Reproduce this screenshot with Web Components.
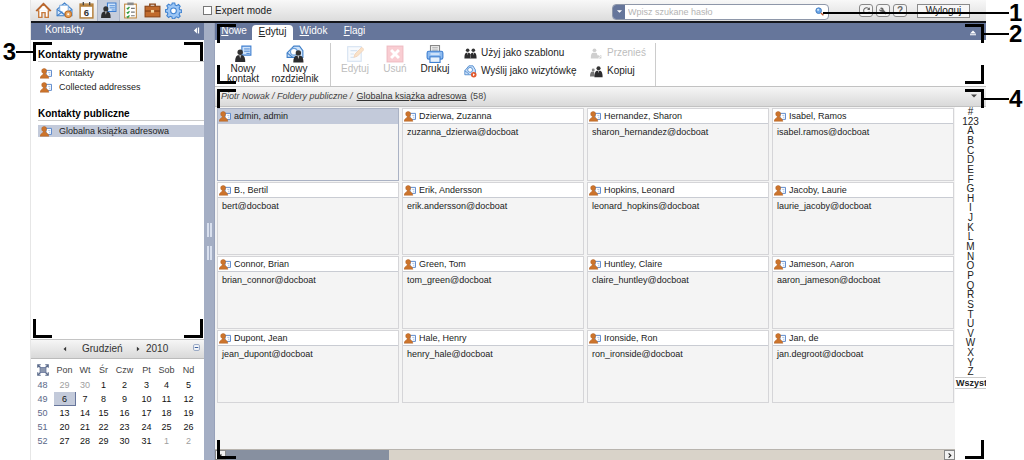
<!DOCTYPE html>
<html lang="pl">
<head>
<meta charset="utf-8">
<title>Kontakty</title>
<style>
html,body{margin:0;background:#fff}
body{font-family:"Liberation Sans",Arial,sans-serif;font-size:10px;line-height:12px;color:#222;
--blue:#66769b;--sel:#c3cada;--bar:linear-gradient(#f6f6f6,#d9d9d9)}
</style>
</head>
<body>
<mail-app></mail-app>
<script>
const ICONS = {
home:'<path d="M2 8.500 8 2l6 6.500M3.500 8v6.500h3V10h3v4.500h3V8" fill="#fff" stroke="#c77a3c" stroke-width="1.300"/><path d="M1 8.500 8 1.300 15 8.500" fill="none" stroke="#b5622c" stroke-width="1.300"/>',
mail:'<path d="M1 7 8 1l7 6v6H1z" fill="#d9e9fa" stroke="#3f7fc8"/><path d="M3.500 3h8v5l-4 3-4-3z" fill="#fff" stroke="#6aa0dc" stroke-width=".8"/><path d="m1 7 7 5 7-5M1 13l5-4" fill="none" stroke="#3f7fc8"/><circle cx="11.500" cy="11.500" r="3" fill="#e8a45c" stroke="#c06a1c"/><circle cx="11.500" cy="11.500" r="1" fill="#fff"/>',
cal:'<rect x="2" y="2" width="12" height="13" fill="#fff" stroke="#b5803c" stroke-width="1.400"/><path d="M2 3.500h12" stroke="#b5803c" stroke-width="2"/><path d="M5 0v3M11 0v3" stroke="#444" stroke-width="1.200"/><text x="8" y="13" font-size="9" font-weight="bold" text-anchor="middle" fill="#333">6</text>',
person:'<path d="M7 1h8v8H7z" fill="#cfe3fa" stroke="#3f7fd0"/><path d="M9 3.500h5M9 5.500h5M11 7.500h3" stroke="#3f7fd0" stroke-width=".8"/><circle cx="5.500" cy="6.500" r="2.400" fill="#333"/><path d="M1 15c0-4 1-6 3-6h3c2 0 3 2 3 6z" fill="#2c2c2e"/><path d="m4.700 9 .8 3 .8-3z" fill="#ccc"/>',
tasks:'<rect x="2.500" y="2" width="11" height="13" fill="#fff" stroke="#c0863c"/><rect x="5" y="0.500" width="6" height="2.500" fill="#8a8a8a"/><path d="m4.500 5.500 1 1 1.500-2m-2.500 5 1 1 1.500-2m-2.500 5 1 1 1.500-2" fill="none" stroke="#2f9a3c" stroke-width="1.200"/><path d="M8.500 6H12M8.500 9.500H12M8.500 13H12" stroke="#777"/>',
case:'<path d="M5.500 4V2h5v2" fill="none" stroke="#8a4416" stroke-width="1.400"/><rect x="1" y="4" width="14" height="10" fill="#c06a2c" stroke="#8a4416"/><path d="M1 8.500h14" stroke="#7a3a12"/><rect x="6.500" y="7.500" width="3" height="2.500" fill="#f4d6a0"/>',
gear:'<path d="m6.800 1h2.400l.4 1.900 1.400.6 1.700-1.100 1.600 1.700-1 1.600.5 1.400 1.900.4v2.300l-1.900.4-.6 1.400 1.100 1.700-1.700 1.600-1.600-1-1.400.5-.4 1.400H6.900l-.4-1.700-1.500-.6-1.600 1.100-1.700-1.700 1-1.600-.5-1.400L.5 9.500V7.200l1.700-.4.6-1.500-1.100-1.600L3.400 2l1.600 1 1.400-.5z" fill="#9cc6f5" stroke="#3f82d0"/><circle cx="8" cy="8.300" r="2.700" fill="#fff" stroke="#3f82d0"/>',
list:'<path d="M1 7 7 1h5l3 4v6H1z" fill="#cfe3fa" stroke="#3f7fc8"/><circle cx="7" cy="6" r="3" fill="#fff" stroke="#6aa0dc"/><path d="m1 7 5 4" stroke="#3f7fc8"/><circle cx="11" cy="7" r="2.400" fill="#333"/><path d="M6.500 15.500c0-4 1-6 3-6h3c2 0 3 2 3 6z" fill="#2c2c2e"/><path d="m10.200 9.500.8 3 .8-3z" fill="#ccc"/>',
edit:'<g opacity=".4"><rect x="1.500" y="1.500" width="12" height="13" fill="#eef4fb" stroke="#9bbbe0"/><path d="M4 5h6M4 8h3M4 11h3" stroke="#9bbbe0"/><path d="m7 11 1-3 6-6 2 2-6 6z" fill="#f5b878" stroke="#d88a4c" stroke-width=".7"/></g>',
del:'<rect x="1" y="1" width="14" height="14" fill="#f9cdd2" stroke="#f0bcc2"/><path d="m4.500 4.500 7 7m0-7-7 7" stroke="#fff" stroke-width="2.600"/>',
print:'<rect x="4" y="0.500" width="8" height="6" fill="#f4f4f4" stroke="#888"/><path d="M5.500 2.500h5M5.500 4.500h5" stroke="#999" stroke-width=".8"/><rect x="1" y="5.500" width="14" height="7" rx="1.500" fill="#8fbcf0" stroke="#3f7fd0"/><path d="M4 8h8" stroke="#fff"/><rect x="3.500" y="10.500" width="9" height="5" fill="#e8f2fd" stroke="#3f7fd0"/>',
two:'<circle cx="4.500" cy="4" r="2.200" fill="#333"/><circle cx="11.500" cy="4" r="2.200" fill="#333"/><path d="M.5 14c0-5 1-7 3-7h2c2 0 2.500 2 2.500 3 0-1 .5-3 2.500-3h2c2 0 3 2 3 7z" fill="#2c2c2e"/><path d="m4 7 .6 3 .6-3zM11 7l.6 3 .6-3z" fill="#ddd"/><path d="M8 10v4" stroke="#999" stroke-width=".8"/>',
send:'<path d="M1 7 6 1h5l3 5v6H1z" fill="#cfe3fa" stroke="#3f7fc8"/><circle cx="7.500" cy="6" r="3" fill="#fff" stroke="#3f7fc8"/><path d="m1 7 5 4" stroke="#3f7fc8"/><circle cx="12" cy="12" r="3.400" fill="#e0582c"/><path d="m11 10.300 2.500 1.700-2.500 1.700z" fill="#fff"/>',
move:'<g fill="#cfcfcf"><circle cx="5.500" cy="4" r="2.300"/><path d="M1 14c0-5 1-7 3-7h3c2 0 2 2 2 3h5v4z"/></g><path d="m10 9 3 2.500-3 2.500" stroke="#fff" fill="none"/>',
copy:'<circle cx="4" cy="6" r="1.800" fill="#888"/><path d="M0 14c0-4 1-6 3-6h2l1 6z" fill="#777"/><circle cx="10.500" cy="4" r="2.500" fill="#333"/><path d="M5.500 15c0-5 1-8 3.500-8h3c2.500 0 3.500 3 3.500 8z" fill="#2c2c2e"/><path d="m9.800 7 .7 3 .7-3z" fill="#ccc"/>',
contact:'<path d="M8 4.500h7.300v8H8z" fill="#fff" stroke="#4f80c8" stroke-width="1.200"/><path d="M11 7.200h2.800M12 9.700h1.800" stroke="#8fb0de"/><path d="M2.300 5c0-4 6.500-4 6.500 0 0 2-.8 3-1.500 3.500 0 2.300 4 1.800 4.500 6.500H.2c.3-4.500 4.300-4 4.300-6.500C3 8 2.300 7 2.300 5z" fill="#cc742c" stroke="#a9591c" stroke-width=".6"/>',
glass:'<circle cx="6.500" cy="6.500" r="5" fill="#6ba7ea" stroke="#3d74b8" stroke-width="1.500"/><circle cx="5.500" cy="5" r="2" fill="#cfe5fb"/><path d="m10.500 10.500 4.500 4" stroke="#b5562c" stroke-width="2.500"/>',
refresh:'<path d="M12.500 5.500A5.200 5.200 0 1 0 13 10" fill="none" stroke="#666" stroke-width="1.800"/><path d="M14 2v5H9z" fill="#666"/>',
wrench:'<path d="M3 3.500c2-2 6-1 6 2.500l5 5.500-2 2L6.500 9C3.500 9.500 1.500 7 2 5l3 1.500L6 5z" fill="#666"/>',
down:'<path d="M2 5h12l-6 6z" fill="currentColor"/>',
up:'<path d="M2 9h12L8 3zM2 10.500h12v2H2z" fill="currentColor"/>',
prev:'<path d="M11 2v12L4 8z" fill="currentColor"/>',
next:'<path d="M5 2v12l7-6z" fill="currentColor"/>',
fold:'<path d="M9 1v14L2 8zM11 1h3v14h-3z" fill="currentColor"/>',
chev:'<path d="m6 3 5 5-5 5" fill="none" stroke="#222" stroke-width="2.500"/>',
minus:'<rect x="1.500" y="1.500" width="13" height="13" rx="2" fill="#fff" stroke="#7f93b8" stroke-width="2"/><path d="M4 8h8" stroke="#3c5f9c" stroke-width="2.500"/>',
grid:'<g fill="none" stroke="#5a6a8a" stroke-width="1.500"><path d="M1 5V1h4M11 1h4v4M15 11v4h-4M5 15H1v-4M1 1l4 4M15 1l-4 4M1 15l4-4M15 15l-4-4"/></g><rect x="4" y="4.500" width="8" height="7" fill="#8b97ae" stroke="#66759b"/>'
};
const RESET = '*{box-sizing:border-box}button{font:inherit;color:inherit;background:none;border:0;padding:0;margin:0}a{color:inherit;text-decoration:none}u{text-decoration:underline}';
function define(name, css, html){
  customElements.define(name, class extends HTMLElement{
    constructor(){
      super();
      const t=document.createElement('template');
      t.innerHTML='<style>'+RESET+css+'</style>'+(typeof html==='function'?html(this):html);
      this.attachShadow({mode:'open'}).append(t.content.cloneNode(true));
    }
  });
}
const ic=(n,s=16)=>`<ui-icon name="${n}" style="--s:${s}px"></ui-icon>`;

define('ui-icon',':host{display:inline-flex;flex:none;width:var(--s,16px);height:var(--s,16px)}svg{display:block;width:100%;height:100%}',
  el=>`<svg viewBox="0 0 16 16" aria-hidden="true">${ICONS[el.getAttribute('name')]||''}</svg>`);

/* Numbered bracket frame laid over a region */
define('callout-frame',`:host{position:absolute;inset:var(--inset);pointer-events:none;z-index:5}
i{position:absolute;width:19px;height:19px;border:0 solid #000}
.a{left:0;top:0;border-width:3px 0 0 3px}.b{right:0;top:0;border-width:3px 3px 0 0}
.c{left:0;bottom:0;border-width:0 0 3px 3px}.d{right:0;bottom:0;border-width:0 3px 3px 0}
span{position:absolute;top:10px;display:flex;align-items:center;height:0;font:bold 24px/18px "Liberation Sans",Arial,sans-serif;color:#000}
span::before{content:"";height:2px;width:var(--line,25px);background:#000}
:host([side=right]) span{left:100%}
:host([side=left]) span{right:100%;flex-direction:row-reverse}`,
'<i class="a"></i><i class="b"></i><i class="c"></i><i class="d"></i><span><slot></slot></span>');

define('top-bar',`:host{display:flex;align-items:center;height:23px;box-sizing:border-box;border-bottom:2px solid #15171c;background:linear-gradient(#f8f8f8,#dcdcdc);padding:0 16px 0 2px}
nav{display:flex;width:151px;align-self:stretch}
nav button{flex:1;display:flex;align-items:center;justify-content:center}
nav button.on{background:#c6cddb;border:solid #adb6c8;border-width:0 1px}
label{display:flex;align-items:center;gap:3px;margin-left:19px;white-space:nowrap}
input[type=checkbox]{appearance:none;width:9px;height:9px;margin:0;border:1px solid #777;background:#fff}
form{display:flex;width:217px;height:16px;margin:2px 0 0 auto;border:1px solid #8e97a9;border-radius:4px;background:#fff;align-items:center;padding-right:4px}
form button:first-child{width:12px;align-self:stretch;background:var(--blue);color:#fff;display:flex;align-items:center;justify-content:center;border-radius:3px 0 0 3px}
input[type=search]{flex:1;min-width:0;border:0;outline:0;padding:0 3px;background:none;font:inherit;font-size:9px}
input::placeholder{color:#b4b4b4;opacity:1}
.q{display:flex}
.tools{display:flex;gap:3px;margin-left:30px}
.tools button{width:14px;height:13px;border:1px solid #888;border-radius:3px;display:flex;align-items:center;justify-content:center;font-weight:bold;color:#666;background:#f4f4f4}
.out{width:53px;height:14px;margin-left:10px;border:1px solid #8a8a8a;line-height:10px;background:#f7f7f7}
.hint{position:relative;width:0;height:0}
.hint span{position:absolute;top:1px;left:-1px;z-index:6;display:flex;align-items:center;height:0;font:bold 24px/18px "Liberation Sans",Arial,sans-serif;color:#000}
.hint span::before{content:"";width:186px;height:2px;background:#000}`,
`<nav aria-label="Moduły">${['home','mail','cal','person','tasks','case','gear'].map(n=>`<button type="button" class="${n==='person'?'on':''}">${ic(n,17)}</button>`).join('')}</nav>
<label><input type="checkbox">Expert mode</label>
<form onsubmit="return false"><button type="button">${ic('down',7)}</button><input type="search" placeholder="Wpisz szukane hasło" aria-label="Wpisz szukane hasło"><button class="q">${ic('glass',9)}</button><div class="hint"><span>1</span></div></form>
<div class="tools"><button type="button">${ic('refresh',9)}</button><button type="button">${ic('wrench',10)}</button><button type="button">?</button></div>
<button type="button" class="out">Wyloguj</button>`);

define('folder-item',`:host{display:block}a{display:flex;align-items:center;gap:7px;height:14px;padding-left:2px;white-space:nowrap;font-size:9px}
:host([selected]) a{background:var(--sel);height:12px}`,
`<a href="#">${ic('contact',12)}<span><slot></slot></span></a>`);

define('folder-group',`:host{display:block}h2{margin:0 0 4px;font:bold 10px/13px "Liberation Sans",Arial,sans-serif;color:#000;border-bottom:1px solid #ccc;white-space:nowrap}`,
`<h2><slot name="title"></slot></h2><slot></slot>`);

const weeks=[[48,29,30,1,2,3,4,5],[49,6,7,8,9,10,11,12],[50,13,14,15,16,17,18,19],[51,20,21,22,23,24,25,26],[52,27,28,29,30,31,1,2]];
define('month-calendar',`:host{display:block;height:121px}
header{display:flex;align-items:center;height:20px;background:var(--bar);border-top:1px solid #c4c4c4;border-bottom:1px solid #bbb;padding:0 4px 0 31px;white-space:nowrap;color:#333}
.m{width:44px;margin:0 9px 0 14px}.y{margin-left:5px}.fold{margin-left:auto;align-self:flex-start;padding-top:4px}
button{display:flex}
table{border-collapse:collapse;table-layout:fixed;width:169px;font-size:9px;line-height:12px;margin-top:3px}
td,th{padding:0;height:14px;text-align:center;font-weight:normal;border:1px solid transparent}
thead th{height:15px;color:#444}tbody th{color:#5a6788}td{color:#111}
td.out{color:#a0a0a0}td.today{background:var(--sel);border:1px solid #66759b}
thead ui-icon{vertical-align:top}`,
`<header><button type="button">${ic('prev',6)}</button><span class="m">Grudzień</span><button type="button">${ic('next',6)}</button><span class="y">2010</span><button type="button" class="fold">${ic('minus',7)}</button></header>
<table><colgroup>${[22,22,19,18,24,20,20,24].map(w=>`<col style="width:${w}px">`).join('')}</colgroup>
<thead><tr><th>${ic('grid',12)}</th>${['Pon','Wt','Śr','Czw','Pt','Sob','Nd'].map(d=>`<th>${d}</th>`).join('')}</tr></thead>
<tbody>${weeks.map((w,r)=>'<tr>'+w.map((d,c)=>c===0?`<th>${d}</th>`:`<td class="${(r===0&&d>20)||(r===4&&d<5)?'out':r===1&&c===1?'today':''}">${d}</td>`).join('')+'</tr>').join('')}</tbody></table>`);

define('side-panel',`:host{display:flex;flex-direction:column;width:173px;flex:none}
header{display:flex;align-items:center;justify-content:space-between;height:17px;background:var(--blue);color:#fff;padding:0 4px 3px 14px}
header button{display:flex}
.list{position:relative;flex:1;padding:8px 0 0 7px}
folder-group+folder-group{margin-top:13px}`,
`<header><span>Kontakty</span><button type="button">${ic('fold',7)}</button></header>
<div class="list"><folder-group><span slot="title">Kontakty prywatne</span><folder-item>Kontakty</folder-item><folder-item>Collected addresses</folder-item></folder-group>
<folder-group><span slot="title">Kontakty publiczne</span><folder-item selected>Globalna książka adresowa</folder-item></folder-group>
<callout-frame side="left" style="--inset:2px 1px 1px 2px;--line:17px">3</callout-frame></div>
<month-calendar></month-calendar>`);

define('split-bar',`:host{display:flex;flex-direction:column;align-items:center;justify-content:center;gap:9px;width:11px;box-sizing:border-box;flex:none;background:#a4aec4;border:solid #97a1b9;border-width:0 1px 0 0}
i{width:5px;height:14px;border:solid #d9e0ee;border-width:0 2px}`,'<i></i><i></i>');

define('tool-button',`:host{display:block;width:var(--w,40px)}:host([disabled]){color:#bdbdbd}
button{display:flex;flex-direction:column;align-items:center;width:100%;text-align:center;line-height:10px;gap:1px;padding-top:5px}
:host([row]) button{flex-direction:row;gap:4px;height:18px;padding:0;white-space:nowrap}
:host([row]) ui-icon{--s:13px!important}`,
el=>`<button type="button">${ic(el.getAttribute('icon'),18)}<span><slot></slot></span></button>`);

define('ribbon-bar',`:host{display:block;position:relative}
nav{display:flex;align-items:stretch;height:17px;padding:2px 9px 0 2px;background:var(--blue);color:#fff}
nav a{width:41px;text-align:center;line-height:12px}nav a:first-child{width:34px;margin-right:1px}
nav a.on{background:#fff;color:#222;border-radius:4px 4px 0 0;line-height:14px}
nav button{margin-left:auto;display:flex;align-items:center}
.row{display:flex;height:46px;padding-left:2px;background:#fff}
.s{width:1px;margin:3px 4px 0 9px;background:#ccc}
.col{padding:4px 0 0 9px;width:135px}.col+.col{padding-left:0;width:65px}.e{margin:3px 0 0}`,
`<nav><a href="#"><u>N</u>owe</a><a href="#" class="on"><u>E</u>dytuj</a><a href="#"><u>W</u>idok</a><a href="#"><u>F</u>lagi</a><button type="button">${ic('up',8)}</button></nav>
<div class="row"><tool-button icon="person" style="--w:52px">Nowy kontakt</tool-button><tool-button icon="list" style="--w:52px">Nowy rozdzielnik</tool-button><div class="s"></div>
<tool-button icon="edit" disabled>Edytuj</tool-button><tool-button icon="del" disabled>Usuń</tool-button><tool-button icon="print">Drukuj</tool-button>
<div class="col"><tool-button row icon="two" style="--w:auto">Użyj jako szablonu</tool-button><tool-button row icon="send" style="--w:auto">Wyślij jako wizytówkę</tool-button></div>
<div class="col"><tool-button row disabled icon="move" style="--w:auto">Przenieś</tool-button><tool-button row icon="copy" style="--w:auto">Kopiuj</tool-button></div><div class="s e"></div></div>
<callout-frame side="right" style="--inset:1px 2px 2px 2px">2</callout-frame>`);

define('contact-card',`:host{display:block;box-sizing:border-box;height:73px;border:1px solid #d5d5d8;background:#f4f4f4;min-width:0;font-size:9px}
h3{display:flex;align-items:center;gap:3px;margin:0;height:15px;padding-left:1px;background:#fff;border-bottom:1px solid #c9ccd3;font:9px/14px "Liberation Sans",Arial,sans-serif;white-space:nowrap}
p{margin:2px 0 0 4px;line-height:12px;white-space:nowrap}
:host([selected]){border-color:#aab2c4}:host([selected]) h3{background:var(--sel);border-color:var(--sel)}`,
`<h3>${ic('contact',12)}<span><slot name="name"></slot></span></h3><p><slot></slot></p>`);

const people=[['admin, admin',''],['Dzierwa, Zuzanna','zuzanna_dzierwa@docboat'],['Hernandez, Sharon','sharon_hernandez@docboat'],['Isabel, Ramos','isabel.ramos@docboat'],
['B., Bertil','bert@docboat'],['Erik, Andersson','erik.andersson@docboat'],['Hopkins, Leonard','leonard_hopkins@docboat'],['Jacoby, Laurie','laurie_jacoby@docboat'],
['Connor, Brian','brian_connor@docboat'],['Green, Tom','tom_green@docboat'],['Huntley, Claire','claire_huntley@docboat'],['Jameson, Aaron','aaron_jameson@docboat'],
['Dupont, Jean','jean_dupont@docboat'],['Hale, Henry','henry_hale@docboat'],['Ironside, Ron','ron_ironside@docboat'],['Jan, de','jan.degroot@docboat']];
define('contact-grid',`:host{display:grid;grid-template-columns:repeat(4,minmax(0,1fr));gap:1px 3px;align-content:start;padding:1px 1px 0 2px;background:#f4f4f4;flex:1}`,
people.map(([n,m],i)=>`<contact-card${i?'':' selected'}><span slot="name">${n}</span>${m}</contact-card>`).join(''));

define('letter-index',`:host{display:block;width:31px;flex:none;background:#fff;overflow:hidden}
nav{display:grid;grid-auto-rows:minmax(0,1fr);height:270px}
a{display:block;text-align:center;line-height:9px;color:#222}
.all{font:bold 9px/10px "Liberation Sans",Arial,sans-serif;border:solid #ccc;border-width:1px 0;padding-left:1px;white-space:nowrap;text-align:left}`,
`<nav>${['#','123',...'ABCDEFGHIJKLMNOPQRSTUVWXYZ'].map(c=>`<a href="#">${c}</a>`).join('')}</nav><a href="#" class="all">Wszyst</a>`);

define('h-scroll',`:host{display:flex;box-sizing:border-box;height:11px;background:#d9d3c9;border-top:1px solid #b8b4ae}
button{width:11px;display:flex;align-items:center;justify-content:center;background:#f1f1f1;border:1px solid #888}
i{width:22%;background:#8790a0}.n{margin-left:auto}`,
`<button type="button">${ic('prev',5)}</button><i></i><button type="button" class="n">${ic('chev',7)}</button>`);

define('contact-list',`:host{display:flex;flex-direction:column;flex:1;position:relative}
header{display:flex;align-items:center;justify-content:space-between;height:21px;background:var(--bar);border:solid #c2c2c2;border-width:1px 0;padding:0 8px 2px 6px;white-space:nowrap;color:#444;font-size:9px}
header button{display:flex}header i{padding-right:4px}header a{text-decoration:underline;color:#333;padding-right:1px}
.body{display:flex;flex:1}.main{display:flex;flex-direction:column;flex:1;min-width:0}`,
`<header><span><i>Piotr Nowak / Foldery publiczne /</i><a href="#">Globalna książka adresowa</a> (58)</span><button type="button">${ic('down',8)}</button></header>
<div class="body"><div class="main"><contact-grid></contact-grid><h-scroll></h-scroll></div><letter-index></letter-index></div>
<callout-frame side="right" style="--inset:3px 2px 1px 2px">4</callout-frame>`);

define('mail-app',`:host{display:flex;flex-direction:column;min-height:100vh;box-sizing:border-box;margin:0 38px 0 30px;border:solid #e6e6e6;border-width:0 0 0 1px}
.work{display:flex;flex:1}main{display:flex;flex-direction:column;flex:1;min-width:0}`,
`<top-bar></top-bar><div class="work"><side-panel></side-panel><split-bar></split-bar><main><ribbon-bar></ribbon-bar><contact-list></contact-list></main></div>`);
</script>
</body>
</html>
